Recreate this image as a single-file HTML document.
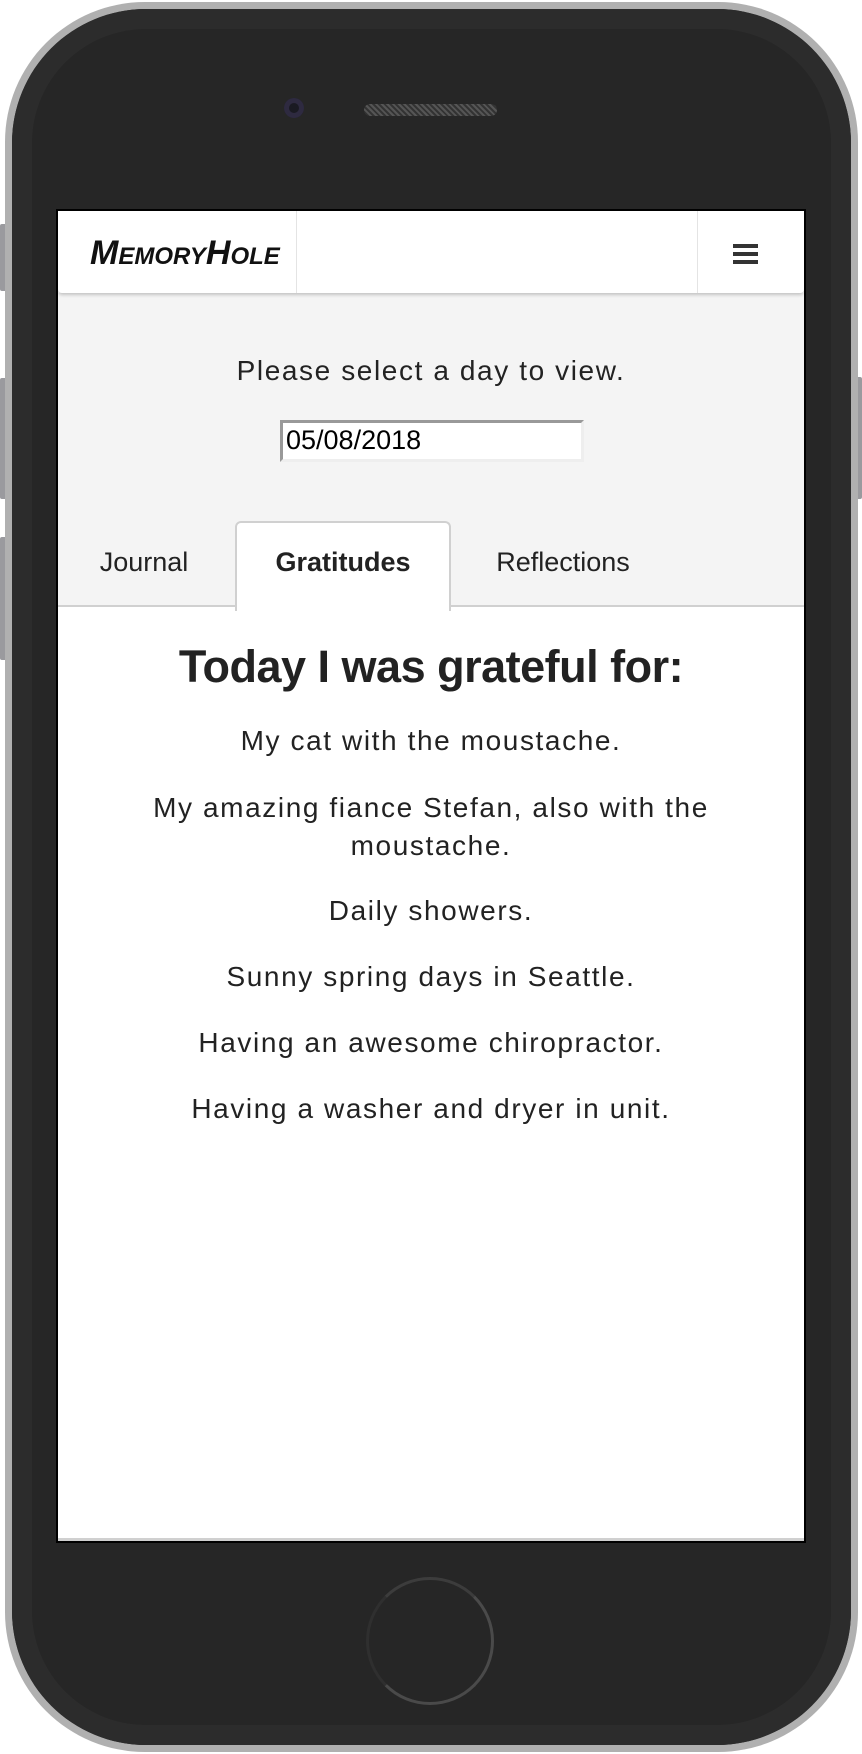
<!DOCTYPE html>
<html><head><meta charset="utf-8"><style>
*{margin:0;padding:0;box-sizing:border-box}
body{width:862px;height:1754px;background:#fff;position:relative;overflow:hidden;font-family:"Liberation Sans",sans-serif}
.abs{position:absolute}
.btn{position:absolute;background:#9a9a9e;border-radius:2px;width:8px}
.phone{left:5px;top:2px;width:853px;height:1750px;border-radius:140px;background:#b0b0b0}
.body{left:12px;top:9px;width:839px;height:1736px;border-radius:134px;background:#262626;box-shadow:inset 0 0 0 20px #2c2c2c}
.screen{left:56px;top:209px;width:750px;height:1334px;background:#fff;border:2px solid #000;overflow:hidden}
.nav{left:0;top:0;width:746px;height:82px;background:#fff;box-shadow:0 2px 3px rgba(0,0,0,.2);border-radius:0 0 4px 4px}
.gray{left:0;top:82px;width:746px;height:314px;background:#f4f4f4;border-bottom:2px solid #d0d0d0}
.c{text-align:center;color:#222;font-size:28px;letter-spacing:1.6px;width:746px;left:0}
</style></head><body>
<div class="btn" style="left:0;top:224px;height:67px"></div>
<div class="btn" style="left:0;top:378px;height:121px"></div>
<div class="btn" style="left:0;top:537px;height:123px"></div>
<div class="btn" style="left:854px;top:377px;height:122px"></div>
<div class="abs phone"></div>
<div class="abs body"></div>
<div class="abs" style="left:284px;top:98px;width:20px;height:20px;border-radius:50%;background:#1a1a22;box-shadow:inset 0 0 0 5px #2e2a40"></div>
<div class="abs" style="left:364px;top:104px;width:133px;height:12px;border-radius:6px;background:repeating-linear-gradient(45deg,#555 0 2px,#333 2px 4px)"></div>
<div class="abs" style="left:366px;top:1577px;width:128px;height:128px;border-radius:50%;border:3px solid #4a4a4a;border-left-color:#2f2f2f;border-top-color:#3c3c3c"></div>
<div class="abs screen">
 <div class="abs gray"></div>
 <div class="abs nav">
  <div class="abs" style="left:238px;top:0;width:1px;height:82px;background:#e4e4e4"></div>
  <div class="abs" style="left:639px;top:0;width:1px;height:82px;background:#e4e4e4"></div>
  <div class="abs" style="left:32px;top:23px;font-size:34px;font-weight:bold;font-style:italic;font-variant:small-caps;color:#111;letter-spacing:0px">MemoryHole</div>
  <div class="abs" style="left:675px;top:33px;width:25px;height:4px;background:#333;box-shadow:0 8px 0 #333,0 16px 0 #333"></div>
 </div>
 <div class="abs c" style="top:144px">Please select a day to view.</div>
 <div class="abs" style="left:222px;top:209px;width:304px;height:42px;background:#fff;border:3px solid #999;border-right-color:#eee;border-bottom-color:#eee;font-size:27px;padding:2px 3px;color:#000">05/08/2018</div>
 <div class="abs" style="left:177px;top:310px;width:216px;height:90px;background:#fff;border:2px solid #d0d0d0;border-bottom:none;border-radius:6px 6px 0 0"></div>
 <div class="abs" style="left:0;top:336px;width:172px;text-align:center;font-size:27px;color:#222">Journal</div>
 <div class="abs" style="left:177px;top:336px;width:216px;text-align:center;font-size:27px;font-weight:bold;color:#222">Gratitudes</div>
 <div class="abs" style="left:400px;top:336px;width:210px;text-align:center;font-size:27px;color:#222">Reflections</div>
 <div class="abs c" style="top:430px;font-size:45px;font-weight:bold;letter-spacing:-0.5px">Today I was grateful for:</div>
 <div class="abs c" style="top:514px">My cat with the moustache.</div>
 <div class="abs c" style="top:578px;line-height:38px;padding:0 70px">My amazing fiance Stefan, also with the moustache.</div>
 <div class="abs c" style="top:684px">Daily showers.</div>
 <div class="abs c" style="top:750px">Sunny spring days in Seattle.</div>
 <div class="abs c" style="top:816px">Having an awesome chiropractor.</div>
 <div class="abs c" style="top:882px">Having a washer and dryer in unit.</div>
 <div class="abs" style="left:0;bottom:0;width:746px;height:3px;background:#d0d0d0"></div>
</div>
</body></html>
